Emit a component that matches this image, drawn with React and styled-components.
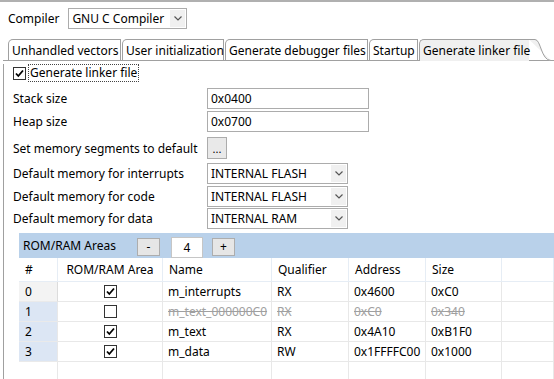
import React from "react";
import styled, { createGlobalStyle } from "styled-components";

const GlobalStyle = createGlobalStyle`
  html, body {
    margin: 0;
    padding: 0;
    background: #fff;
  }
  body {
    font-family: "Noto Sans", "Open Sans", sans-serif;
    font-size: 12px;
    color: #000;
  }
`;

const tabs = [
  { label: "Unhandled vectors", w: 113 },
  { label: "User initialization", w: 102 },
  { label: "Generate debugger files", w: 143 },
  { label: "Startup", w: 49 },
];

const areas = [
  { id: 0, on: true, name: "m_interrupts", q: "RX", addr: "0x4600", size: "0xC0", sel: true },
  { id: 1, on: false, name: "m_text_000000C0", q: "RX", addr: "0xC0", size: "0x340", off: true },
  { id: 2, on: true, name: "m_text", q: "RX", addr: "0x4A10", size: "0xB1F0" },
  { id: 3, on: true, name: "m_data", q: "RW", addr: "0x1FFFFC00", size: "0x1000" },
];

function Chevron() {
  return (
    <svg width="8" height="5" viewBox="0 0 8 5">
      <path d="M0.5 0.5 L4 4 L7.5 0.5" fill="none" stroke="#555" strokeWidth="1.2" />
    </svg>
  );
}

function Check({ on }) {
  return (
    <CheckBox>
      {on && (
        <svg width="11" height="11" viewBox="0 0 11 11">
          <path d="M2 5.5 L4.3 8 L9 2.5" fill="none" stroke="#000" strokeWidth="1.8" />
        </svg>
      )}
    </CheckBox>
  );
}

function Dropdown({ value, width }) {
  return (
    <SelectBox $w={width}>
      <SelectText>{value}</SelectText>
      <SelectArrow>
        <Chevron />
      </SelectArrow>
    </SelectBox>
  );
}

function App() {
  return (
    <>
      <GlobalStyle />
      <Frame>
        <CompilerRow>
          <span>Compiler</span>
          <Dropdown value="GNU C Compiler" width={119} />
        </CompilerRow>

        <TabBar>
          {tabs.map((t) => (
            <Tab key={t.label} $w={t.w}>
              {t.label}
            </Tab>
          ))}
          <ActiveTab>
            Generate linker file
            <TabCurve width="22" height="23" viewBox="0 0 22 23">
              <path d="M0 0.5 L6 0.5 C12 0.5 12 21.5 22 21.5" fill="#f0f0f0" stroke="none" />
              <path d="M0 0.5 L6 0.5 C12 0.5 12 21.5 22 21.5" fill="none" stroke="#a0a0a0" />
            </TabCurve>
          </ActiveTab>
        </TabBar>

        <Panel>
          <CheckRow>
            <Check on />
            <FocusLabel>Generate linker file</FocusLabel>
          </CheckRow>

          <FieldRow $top={6}>
            <span>Stack size</span>
            <TextInput>0x0400</TextInput>
          </FieldRow>
          <FieldRow $top={2}>
            <span>Heap size</span>
            <TextInput>0x0700</TextInput>
          </FieldRow>
          <FieldRow $top={5} $h={22}>
            <span>Set memory segments to default</span>
            <DotsButton>...</DotsButton>
          </FieldRow>
          <FieldRow $top={4}>
            <span>Default memory for interrupts</span>
            <Dropdown value="INTERNAL FLASH" width={141} />
          </FieldRow>
          <FieldRow $top={2}>
            <span>Default memory for code</span>
            <Dropdown value="INTERNAL FLASH" width={141} />
          </FieldRow>
          <FieldRow $top={1}>
            <span>Default memory for data</span>
            <Dropdown value="INTERNAL RAM" width={141} />
          </FieldRow>

          <AreaTable>
            <AreaBar>
              <AreaTitle>ROM/RAM Areas</AreaTitle>
              <SpinButton>-</SpinButton>
              <CountField>4</CountField>
              <SpinButton>+</SpinButton>
            </AreaBar>
            <Grid>
              <HeadCell>#</HeadCell>
              <HeadCell $center>ROM/RAM Area</HeadCell>
              <HeadCell>Name</HeadCell>
              <HeadCell>Qualifier</HeadCell>
              <HeadCell>Address</HeadCell>
              <HeadCell>Size</HeadCell>
              <HeadCell />
              {areas.map((a) => (
                <React.Fragment key={a.id}>
                  <IndexCell $sel={a.sel}>{a.id}</IndexCell>
                  <Cell $center>
                    <Check on={a.on} />
                  </Cell>
                  <Cell $off={a.off}>{a.name}</Cell>
                  <Cell $off={a.off}>{a.q}</Cell>
                  <Cell $off={a.off}>{a.addr}</Cell>
                  <Cell $off={a.off}>{a.size}</Cell>
                  <Cell />
                </React.Fragment>
              ))}
              <Cell $blank />
              <Cell />
              <Cell />
              <Cell />
              <Cell />
              <Cell />
              <Cell />
            </Grid>
          </AreaTable>
        </Panel>
      </Frame>
    </>
  );
}

export default App;

const Frame = styled.div`
  width: 554px;
  height: 379px;
  overflow: hidden;
  box-sizing: border-box;
  border-top: 2px solid #b0b0b0;
  background: #fff;
`;

const CompilerRow = styled.div`
  display: flex;
  align-items: center;
  gap: 9px;
  height: 20px;
  margin-top: 6px;
  padding-left: 8px;
`;

const SelectBox = styled.div`
  width: ${(p) => p.$w}px;
  height: 21px;
  box-sizing: border-box;
  border: 1px solid #acacac;
  background: #fff;
  display: flex;
  align-items: stretch;
`;

const SelectText = styled.div`
  flex: 1;
  display: flex;
  align-items: center;
  padding-left: 3px;
  white-space: nowrap;
`;

const SelectArrow = styled.div`
  width: 15px;
  margin: 1px;
  background: #f0f0f0;
  display: flex;
  align-items: center;
  justify-content: center;
`;

const TabBar = styled.div`
  display: flex;
  align-items: flex-end;
  height: 22px;
  margin-top: 11px;
  padding-left: 8px;
  position: relative;
  &:after {
    content: "";
    position: absolute;
    left: 3px;
    right: 0;
    bottom: 0;
    border-bottom: 1px solid #a0a0a0;
  }
`;

const Tab = styled.div`
  width: ${(p) => p.$w}px;
  height: 22px;
  box-sizing: border-box;
  border: 1px solid #a0a0a0;
  border-bottom: none;
  border-top-left-radius: 5px;
  margin-right: 1px;
  padding-left: 3px;
  display: flex;
  align-items: center;
  white-space: nowrap;
  background: #fff;
`;

const ActiveTab = styled.div`
  position: relative;
  width: 110px;
  height: 22px;
  box-sizing: border-box;
  border-left: 1px solid #a0a0a0;
  border-top: 1px solid #a0a0a0;
  border-top-left-radius: 5px;
  padding-left: 3px;
  display: flex;
  align-items: center;
  white-space: nowrap;
  background: #f0f0f0;
  z-index: 1;
`;

const TabCurve = styled.svg`
  position: absolute;
  left: 109px;
  top: -1px;
`;

const Panel = styled.div`
  margin-left: 3px;
  border-left: 1px solid #a0a0a0;
  padding-left: 9px;
  height: 320px;
`;

const CheckRow = styled.div`
  display: flex;
  align-items: center;
  gap: 2px;
  height: 18px;
  margin-top: 3px;
`;

const CheckBox = styled.div`
  width: 13px;
  height: 13px;
  box-sizing: border-box;
  border: 1px solid #333;
  background: #fff;
  display: flex;
  align-items: center;
  justify-content: center;
`;

const FocusLabel = styled.span`
  border: 1px dotted #444;
  padding: 0 1px;
  line-height: 16px;
`;

const FieldRow = styled.div`
  display: grid;
  grid-template-columns: 194px auto;
  align-items: center;
  height: ${(p) => p.$h || 21}px;
  margin-top: ${(p) => p.$top}px;
`;

const TextInput = styled.div`
  width: 162px;
  height: 21px;
  box-sizing: border-box;
  border: 1px solid #acacac;
  padding-left: 3px;
  display: flex;
  align-items: center;
`;

const DotsButton = styled.div`
  width: 20px;
  height: 22px;
  box-sizing: border-box;
  border: 1px solid #acacac;
  background: #e9e9e9;
  display: flex;
  align-items: flex-end;
  justify-content: center;
  line-height: 18px;
  font-size: 11px;
`;

const AreaTable = styled.div`
  margin-top: 4px;
  margin-left: 6px;
`;

const AreaBar = styled.div`
  height: 25px;
  background: #b9d1ea;
  display: flex;
  align-items: center;
  padding-left: 4px;
`;

const AreaTitle = styled.span`
  width: 114px;
`;

const SpinButton = styled.div`
  width: 23px;
  height: 18px;
  box-sizing: border-box;
  border: 1px solid #adadad;
  background: #e6e6e6;
  display: flex;
  align-items: center;
  justify-content: center;
  margin-top: 2px;
`;

const CountField = styled.div`
  width: 32px;
  height: 21px;
  box-sizing: border-box;
  border: 1px solid #c6c6c6;
  background: #fff;
  margin: 3px 9px 0 11px;
  display: flex;
  align-items: center;
  justify-content: center;
`;

const Grid = styled.div`
  display: grid;
  grid-template-columns: 39px 105px 109px 77px 77px 76px 1fr;
  grid-auto-rows: 20px;
  grid-template-rows: 24px;
`;

const HeadCell = styled.div`
  display: flex;
  align-items: center;
  justify-content: ${(p) => (p.$center ? "center" : "flex-start")};
  padding-left: ${(p) => (p.$center ? 0 : 6)}px;
  border-right: 1px solid #e6edf5;
  border-bottom: 1px solid #e6edf5;
  white-space: nowrap;
`;

const Cell = styled.div`
  display: flex;
  align-items: center;
  justify-content: ${(p) => (p.$center ? "center" : "flex-start")};
  padding-left: ${(p) => (p.$center ? 0 : 5)}px;
  border-right: 1px solid #e8e8e8;
  border-bottom: 1px solid #e8e8e8;
  white-space: nowrap;
  color: ${(p) => (p.$off ? "#a0a0a0" : "#000")};
  text-decoration: ${(p) => (p.$off ? "line-through" : "none")};
`;

const IndexCell = styled.div`
  display: flex;
  align-items: center;
  padding-left: 6px;
  background: ${(p) => (p.$sel ? "#f3f3f3" : "#dce6f4")};
  border-right: 1px solid ${(p) => (p.$sel ? "#dcdcdc" : "#e8e8e8")};
  border-bottom: 1px solid #eaeaea;
`;
